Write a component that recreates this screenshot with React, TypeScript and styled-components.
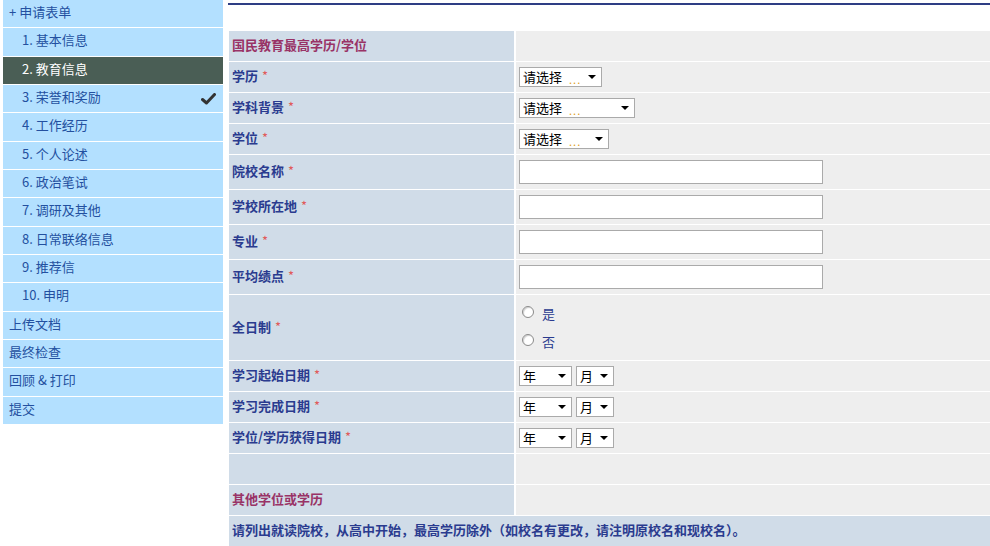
import styled, { createGlobalStyle } from "styled-components";

const GlobalStyle = createGlobalStyle`
  html, body {
    margin: 0;
    padding: 0;
    background: #ffffff;
    font-family: "Noto Sans CJK SC", "Noto Sans", sans-serif;
    font-size: 13px;
  }
`;

const Page = styled.div`
  display: flex;
  gap: 5px;
  padding-left: 3px;
  width: 990px;
  height: 546px;
  box-sizing: border-box;
  overflow: hidden;
`;

const Sidebar = styled.ul`
  list-style: none;
  margin: 0;
  padding: 0;
  width: 220px;
  flex-shrink: 0;
`;

const NavItem = styled.li<{ $sub?: boolean; $active?: boolean }>`
  display: flex;
  align-items: center;
  justify-content: space-between;
  height: 27.33px;
  box-sizing: content-box;
  border-bottom: 1px solid #ffffff;
  padding: 0 7px 0 ${(p) => (p.$sub ? "19px" : "6px")};
  background: ${(p) => (p.$active ? "#4a5e55" : "#b3e0ff")};
  color: ${(p) => (p.$active ? "#ffffff" : "#2350a0")};
  font-size: 13px;
  cursor: pointer;

  & > span {
    position: relative;
    top: -2px;
  }
`;

const Main = styled.div`
  flex: 1;
  display: flex;
  flex-direction: column;
`;

const TopRule = styled.div`
  margin-top: 3px;
  height: 2px;
  background: #2e3d84;
`;

const FormGrid = styled.div`
  margin-top: 26px;
  margin-left: 1px;
  display: grid;
  grid-template-columns: 285px 1fr;
  column-gap: 2px;
  row-gap: 1px;
`;

const Label = styled.div<{ $h?: number; $heading?: boolean }>`
  height: ${(p) => p.$h ?? 30}px;
  box-sizing: border-box;
  display: flex;
  align-items: center;
  padding: 0 0 3px 3px;
  background: #d0dce8;
  color: ${(p) => (p.$heading ? "#993366" : "#2a3b8f")};
  font-weight: 700;
  font-size: 13px;
`;

const Value = styled.div<{ $h?: number }>`
  height: ${(p) => p.$h ?? 30}px;
  display: flex;
  align-items: center;
  gap: 4px;
  padding-left: 3px;
  background: #eeeeee;
`;

const Note = styled.div`
  grid-column: 1 / span 2;
  height: 30px;
  box-sizing: border-box;
  display: flex;
  align-items: center;
  padding: 0 0 3px 3px;
  background: #d0dce8;
  color: #2a3b8f;
  font-weight: 700;
  font-size: 13px;
`;

const Star = styled.span`
  color: #e05a5a;
  font-weight: 400;
  margin-left: 4px;
`;

const SelectBox = styled.div<{ $w: number }>`
  width: ${(p) => p.$w}px;
  height: 20px;
  box-sizing: border-box;
  border: 1px solid #aaaaaa;
  background: #ffffff;
  display: flex;
  align-items: center;
  padding: 0 5px 1px 3px;
  color: #000000;
  font-weight: 400;
  font-size: 13px;
`;

const Dots = styled.span`
  color: #e0a020;
  margin-left: 7px;
  font-size: 11px;
  letter-spacing: 1px;
  position: relative;
  top: 2px;
`;

const Arrow = styled.span`
  margin-left: auto;
  width: 0;
  height: 0;
  border-left: 4px solid transparent;
  border-right: 4px solid transparent;
  border-top: 4px solid #000000;
`;

const TextBox = styled.input`
  width: 304px;
  height: 24px;
  box-sizing: border-box;
  border: 1px solid #aaaaaa;
  background: #ffffff;
  padding: 0 4px;
  font-size: 13px;
  outline: none;
`;

const RadioGroup = styled.div`
  display: flex;
  flex-direction: column;
  gap: 10px;
  padding-left: 3px;
`;

const RadioRow = styled.label`
  display: flex;
  align-items: center;
  gap: 8px;
  color: #2a3b8f;
  font-size: 13px;
  height: 18px;
`;

const RadioDot = styled.span`
  width: 12px;
  height: 12px;
  border-radius: 50%;
  box-sizing: border-box;
  border: 1px solid #8a8a8a;
  background: #ffffff;
  box-shadow: inset 1px 1px 1px #cfcfcf;
  position: relative;
  top: -2px;
`;

function Select({ w, text, dots }: { w: number; text: string; dots?: boolean }) {
  return (
    <SelectBox $w={w}>
      {text}
      {dots && <Dots>...</Dots>}
      <Arrow />
    </SelectBox>
  );
}

function Check() {
  return (
    <svg width="15" height="12" viewBox="0 0 15 12">
      <path d="M1.5 6.5 L5.5 10 L13.5 1.5" fill="none" stroke="#333333" strokeWidth="3" strokeLinecap="round" strokeLinejoin="round" />
    </svg>
  );
}

const navItems = [
  { text: "+ 申请表单" },
  { text: "1. 基本信息", sub: true },
  { text: "2. 教育信息", sub: true, active: true },
  { text: "3. 荣誉和奖励", sub: true, done: true },
  { text: "4. 工作经历", sub: true },
  { text: "5. 个人论述", sub: true },
  { text: "6. 政治笔试", sub: true },
  { text: "7. 调研及其他", sub: true },
  { text: "8. 日常联络信息", sub: true },
  { text: "9. 推荐信", sub: true },
  { text: "10. 申明", sub: true },
  { text: "上传文档" },
  { text: "最终检查" },
  { text: "回顾 & 打印" },
  { text: "提交" },
];

const dateRows = ["学习起始日期", "学习完成日期", "学位/学历获得日期"];
const textRows = ["院校名称", "学校所在地", "专业", "平均绩点"];

function App() {
  return (
    <>
      <GlobalStyle />
      <Page>
        <Sidebar>
          {navItems.map((item) => (
            <NavItem key={item.text} $sub={item.sub} $active={item.active}>
              <span>{item.text}</span>
              {item.done && <Check />}
            </NavItem>
          ))}
        </Sidebar>
        <Main>
          <TopRule />
          <FormGrid>
            <Label $heading>国民教育最高学历/学位</Label>
            <Value />

            <Label>学历<Star>*</Star></Label>
            <Value><Select w={83} text="请选择" dots /></Value>

            <Label>学科背景<Star>*</Star></Label>
            <Value><Select w={116} text="请选择" dots /></Value>

            <Label>学位<Star>*</Star></Label>
            <Value><Select w={90} text="请选择" dots /></Value>

            {textRows.map((t) => (
              <>
                <Label key={t + "l"} $h={34}>{t}<Star>*</Star></Label>
                <Value key={t + "v"} $h={34}><TextBox type="text" /></Value>
              </>
            ))}

            <Label $h={65}>全日制<Star>*</Star></Label>
            <Value $h={65}>
              <RadioGroup>
                <RadioRow><RadioDot />是</RadioRow>
                <RadioRow><RadioDot />否</RadioRow>
              </RadioGroup>
            </Value>

            {dateRows.map((t) => (
              <>
                <Label key={t + "l"}>{t}<Star>*</Star></Label>
                <Value key={t + "v"}>
                  <Select w={53} text="年" />
                  <Select w={38} text="月" />
                </Value>
              </>
            ))}

            <Label />
            <Value />

            <Label $heading>其他学位或学历</Label>
            <Value />

            <Note>请列出就读院校，从高中开始，最高学历除外（如校名有更改，请注明原校名和现校名）。</Note>
          </FormGrid>
        </Main>
      </Page>
    </>
  );
}

export default App;
